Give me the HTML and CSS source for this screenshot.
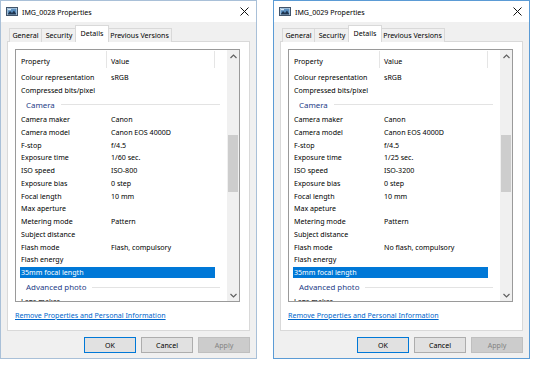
FILE: index.html
```html
<!DOCTYPE html>
<html>
<head>
<meta charset="utf-8">
<link rel="stylesheet" href="styles.css">
</head>
<body>
<div class="screen">
  <div class="dialog inactive">
    <div class="titlebar">
      <svg class="ico" width="12" height="9" viewBox="0 0 12 9"><rect x="0.5" y="0.5" width="11" height="8" fill="#dfe8f0" stroke="#41546a"/><rect x="1.5" y="1.5" width="9" height="6" fill="#5a8fc0"/><path d="M1.5 7.5 L4 4 L6 6 L8 3.5 L10.5 7.5 Z" fill="#1f3550"/><rect x="2" y="2" width="3" height="1.2" fill="#d7e6f3"/></svg>
      <span class="title">IMG_0028 Properties</span>
      <svg class="close" width="9" height="9" viewBox="0 0 9 9"><path d="M0.5 0.5 L8.5 8.5 M8.5 0.5 L0.5 8.5" stroke="#111" stroke-width="1"/></svg>
    </div>
    <div class="content">
      <div class="tabs">
        <div class="tab t-general">General</div>
        <div class="tab t-security">Security</div>
        <div class="tab t-details active">Details</div>
        <div class="tab t-prev">Previous Versions</div>
      </div>
      <div class="panel">
        <div class="list">
          <div class="rows">
            <div class="hdr"><span class="c1">Property</span><span class="div1"></span><span class="c2">Value</span><span class="div2"></span></div>
            <div class="row"><span class="c1">Colour representation</span><span class="c2">sRGB</span></div>
            <div class="row"><span class="c1">Compressed bits/pixel</span><span class="c2"></span></div>
            <div class="group"><span class="gname">Camera</span><span class="gline"></span></div>
            <div class="row"><span class="c1">Camera maker</span><span class="c2">Canon</span></div>
            <div class="row"><span class="c1">Camera model</span><span class="c2">Canon EOS 4000D</span></div>
            <div class="row"><span class="c1">F-stop</span><span class="c2">f/4.5</span></div>
            <div class="row"><span class="c1">Exposure time</span><span class="c2">1/60 sec.</span></div>
            <div class="row"><span class="c1">ISO speed</span><span class="c2">ISO-800</span></div>
            <div class="row"><span class="c1">Exposure bias</span><span class="c2">0 step</span></div>
            <div class="row"><span class="c1">Focal length</span><span class="c2">10 mm</span></div>
            <div class="row"><span class="c1">Max aperture</span><span class="c2"></span></div>
            <div class="row"><span class="c1">Metering mode</span><span class="c2">Pattern</span></div>
            <div class="row"><span class="c1">Subject distance</span><span class="c2"></span></div>
            <div class="row"><span class="c1">Flash mode</span><span class="c2">Flash, compulsory</span></div>
            <div class="row"><span class="c1">Flash energy</span><span class="c2"></span></div>
            <div class="row sel"><span class="c1">35mm focal length</span><span class="c2"></span></div>
            <div class="group"><span class="gname">Advanced photo</span><span class="gline"></span></div>
            <div class="row"><span class="c1">Lens maker</span><span class="c2"></span></div>
          </div>
          <div class="scroll">
            <div class="arrow"><svg width="7" height="5" viewBox="0 0 7 5"><path d="M0.5 4 L3.5 1 L6.5 4" fill="none" stroke="#606060" stroke-width="1.2"/></svg></div>
            <div class="track"><div class="thumb"></div></div>
            <div class="arrow"><svg width="7" height="5" viewBox="0 0 7 5"><path d="M0.5 1 L3.5 4 L6.5 1" fill="none" stroke="#606060" stroke-width="1.2"/></svg></div>
          </div>
        </div>
        <a class="link">Remove Properties and Personal Information</a>
      </div>
      <div class="buttons">
        <div class="btn default">OK</div>
        <div class="btn">Cancel</div>
        <div class="btn disabled">Apply</div>
      </div>
    </div>
  </div>

  <div class="dialog active-win">
    <div class="titlebar">
      <svg class="ico" width="12" height="9" viewBox="0 0 12 9"><rect x="0.5" y="0.5" width="11" height="8" fill="#dfe8f0" stroke="#41546a"/><rect x="1.5" y="1.5" width="9" height="6" fill="#5a8fc0"/><path d="M1.5 7.5 L4 4 L6 6 L8 3.5 L10.5 7.5 Z" fill="#1f3550"/><rect x="2" y="2" width="3" height="1.2" fill="#d7e6f3"/></svg>
      <span class="title">IMG_0029 Properties</span>
      <svg class="close" width="9" height="9" viewBox="0 0 9 9"><path d="M0.5 0.5 L8.5 8.5 M8.5 0.5 L0.5 8.5" stroke="#111" stroke-width="1"/></svg>
    </div>
    <div class="content">
      <div class="tabs">
        <div class="tab t-general">General</div>
        <div class="tab t-security">Security</div>
        <div class="tab t-details active">Details</div>
        <div class="tab t-prev">Previous Versions</div>
      </div>
      <div class="panel">
        <div class="list">
          <div class="rows">
            <div class="hdr"><span class="c1">Property</span><span class="div1"></span><span class="c2">Value</span><span class="div2"></span></div>
            <div class="row"><span class="c1">Colour representation</span><span class="c2">sRGB</span></div>
            <div class="row"><span class="c1">Compressed bits/pixel</span><span class="c2"></span></div>
            <div class="group"><span class="gname">Camera</span><span class="gline"></span></div>
            <div class="row"><span class="c1">Camera maker</span><span class="c2">Canon</span></div>
            <div class="row"><span class="c1">Camera model</span><span class="c2">Canon EOS 4000D</span></div>
            <div class="row"><span class="c1">F-stop</span><span class="c2">f/4.5</span></div>
            <div class="row"><span class="c1">Exposure time</span><span class="c2">1/25 sec.</span></div>
            <div class="row"><span class="c1">ISO speed</span><span class="c2">ISO-3200</span></div>
            <div class="row"><span class="c1">Exposure bias</span><span class="c2">0 step</span></div>
            <div class="row"><span class="c1">Focal length</span><span class="c2">10 mm</span></div>
            <div class="row"><span class="c1">Max apeture</span><span class="c2"></span></div>
            <div class="row"><span class="c1">Metering mode</span><span class="c2">Pattern</span></div>
            <div class="row"><span class="c1">Subject distance</span><span class="c2"></span></div>
            <div class="row"><span class="c1">Flash mode</span><span class="c2">No flash, compulsory</span></div>
            <div class="row"><span class="c1">Flash energy</span><span class="c2"></span></div>
            <div class="row sel"><span class="c1">35mm focal length</span><span class="c2"></span></div>
            <div class="group"><span class="gname">Advanced photo</span><span class="gline"></span></div>
            <div class="row"><span class="c1">Lens maker</span><span class="c2"></span></div>
          </div>
          <div class="scroll">
            <div class="arrow"><svg width="7" height="5" viewBox="0 0 7 5"><path d="M0.5 4 L3.5 1 L6.5 4" fill="none" stroke="#606060" stroke-width="1.2"/></svg></div>
            <div class="track"><div class="thumb"></div></div>
            <div class="arrow"><svg width="7" height="5" viewBox="0 0 7 5"><path d="M0.5 1 L3.5 4 L6.5 1" fill="none" stroke="#606060" stroke-width="1.2"/></svg></div>
          </div>
        </div>
        <a class="link">Remove Properties and Personal Information</a>
      </div>
      <div class="buttons">
        <div class="btn default">OK</div>
        <div class="btn">Cancel</div>
        <div class="btn disabled">Apply</div>
      </div>
    </div>
  </div>
</div>
</body>
</html>
```

FILE: styles.css
```css
html, body {
  margin: 0;
  padding: 0;
  background: #ffffff;
}
body {
  font-family: "Noto Sans", "Open Sans", "DejaVu Sans", sans-serif;
  font-size: 7.1px;
  color: #000;
  width: 540px;
  height: 372px;
  overflow: hidden;
}
.screen {
  display: flex;
  gap: 16px;
  align-items: flex-start;
}
.dialog {
  width: 257px;
  height: 359px;
  box-sizing: border-box;
  border: 1px solid #a9c0d8;
  display: flex;
  flex-direction: column;
  background: #f0f0f0;
}
.dialog.active-win {
  border-color: #5b9bd5;
}
.titlebar {
  height: 21px;
  flex: none;
  background: #fff;
  display: flex;
  align-items: center;
}
.ico {
  margin-left: 5px;
  margin-right: 4px;
  flex: none;
}
.title {
  font-size: 7.1px;
  line-height: 12px;
  color: #000;
  white-space: nowrap;
}
.close {
  margin-left: auto;
  margin-right: 7px;
}
.content {
  flex: 1;
  display: flex;
  flex-direction: column;
  padding: 4px 6px 0 6px;
}
.tabs {
  display: flex;
  align-items: flex-end;
  height: 16px;
  padding-left: 2px;
  position: relative;
  z-index: 2;
  margin-bottom: -1px;
}
.tab {
  height: 14px;
  box-sizing: border-box;
  border: 1px solid #d9d9d9;
  border-bottom: none;
  border-right: none;
  background: #f0f0f0;
  line-height: 13px;
  text-align: center;
  white-space: nowrap;
}
.t-general { width: 32px; }
.t-security { width: 35px; }
.t-details { width: 34px; }
.t-prev { width: 64px; border-right: 1px solid #d9d9d9; }
.tab.active {
  height: 17px;
  background: #fff;
  border-right: 1px solid #d9d9d9;
  line-height: 14px;
  margin-left: -1px;
  margin-right: -1px;
  position: relative;
  z-index: 3;
}
.tab.active + .tab { border-left: none; }
.panel {
  height: 290px;
  width: 243px;
  box-sizing: border-box;
  background: #fff;
  border: 1px solid #d9d9d9;
  padding: 7px 9px 0 7px;
  display: flex;
  flex-direction: column;
}
.list {
  height: 253px;
  box-sizing: border-box;
  border: 1px solid #9a9a9a;
  display: flex;
  overflow: hidden;
  flex: none;
}
.rows {
  flex: 1;
  overflow: hidden;
}
.hdr {
  height: 21px;
  display: flex;
  align-items: center;
  position: relative;
}
.hdr .c1, .row .c1 {
  width: 90px;
  padding-left: 5px;
  flex: none;
  white-space: nowrap;
}
.hdr .c2, .row .c2 {
  white-space: nowrap;
}
.div1, .div2 {
  position: absolute;
  top: 1px;
  bottom: 3px;
  width: 1px;
  background: #e5e5e5;
}
.div1 { left: 90px; }
.div2 { left: 198px; }
.row {
  height: 12.75px;
  line-height: 12.75px;
  display: flex;
}
.row.sel {
  background: #0078d7;
  color: #fff;
  height: 10.75px;
  line-height: 10.75px;
  margin: 1px 0 1px 4px;
  width: 195px;
}
.row.sel .c1 {
  padding-left: 1px;
  width: 94px;
}
.group {
  height: 16.5px;
  display: flex;
  align-items: center;
  padding-left: 10px;
  padding-right: 7px;
}
.gname {
  font-size: 7.9px;
  color: #1e3c87;
  white-space: nowrap;
}
.gline {
  flex: 1;
  height: 1px;
  background: #e3e3e3;
  margin-left: 6px;
}
.scroll {
  width: 12px;
  flex: none;
  background: #f0f0f0;
  display: flex;
  flex-direction: column;
}
.arrow {
  height: 12px;
  display: flex;
  align-items: center;
  justify-content: center;
  flex: none;
}
.track {
  flex: 1;
}
.thumb {
  margin-top: 73px;
  height: 57px;
  width: 10px;
  margin-left: 1px;
  background: #cdcdcd;
}
.link {
  margin-top: 8px;
  color: #0066cc;
  text-decoration: underline;
  line-height: 11px;
  white-space: nowrap;
}
.buttons {
  display: flex;
  justify-content: flex-end;
  gap: 5px;
  padding-top: 6px;
}
.btn {
  width: 52px;
  height: 16px;
  box-sizing: border-box;
  border: 1px solid #adadad;
  background: #e1e1e1;
  text-align: center;
  line-height: 14px;
}
.btn.default {
  border-color: #0078d7;
}
.btn.disabled {
  background: #cccccc;
  border-color: #bfbfbf;
  color: #838383;
}
```
